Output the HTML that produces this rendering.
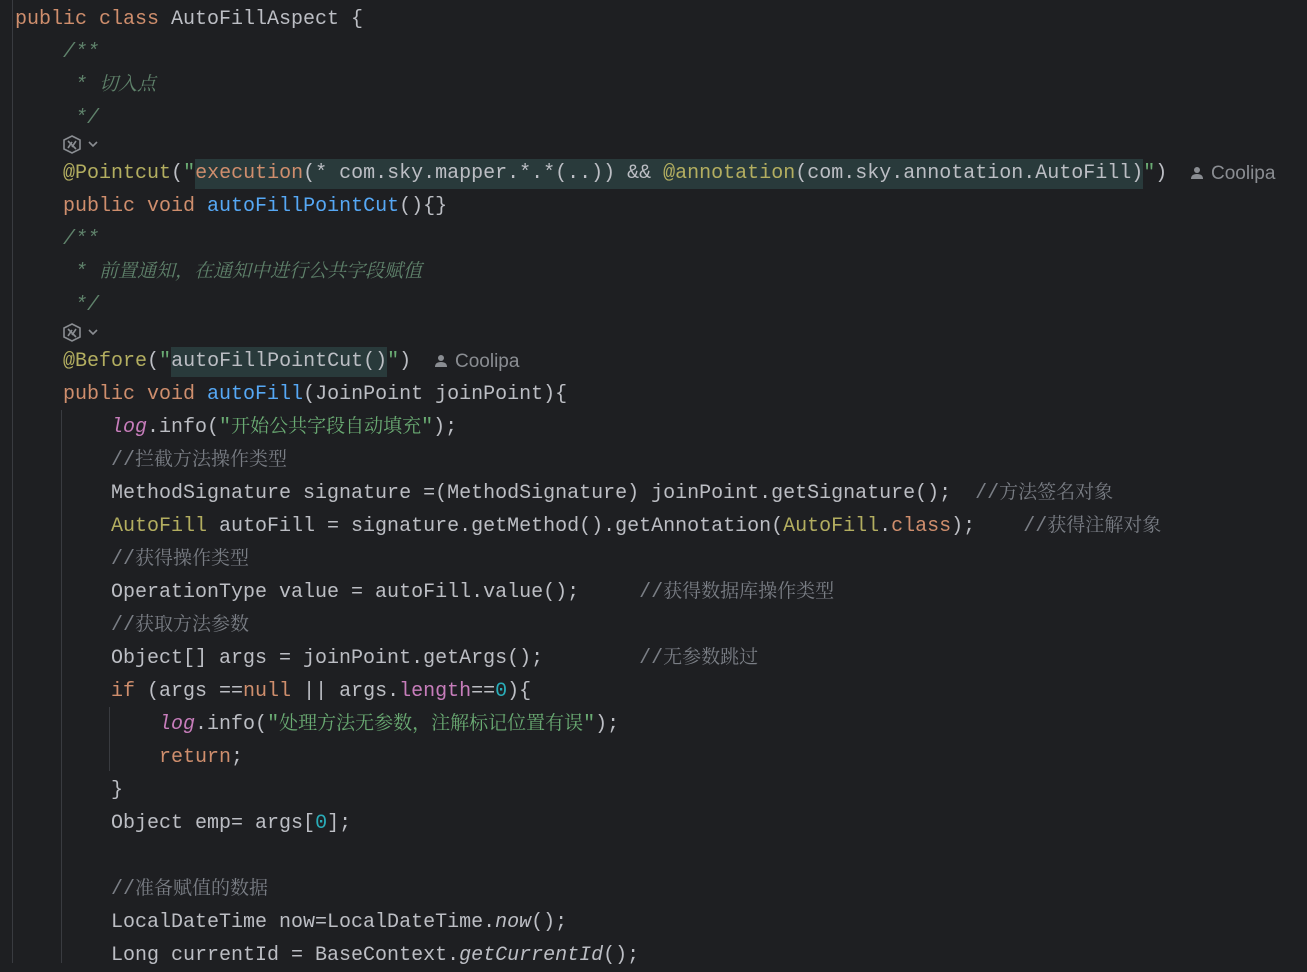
<!DOCTYPE html>
<html><head><meta charset="utf-8"><style>
body{margin:0;width:1307px;height:963px;background:#1e1f22;overflow:hidden;position:relative;font-family:"Liberation Mono","Noto Sans CJK SC",monospace;font-size:20px;color:#bcbec4}
.l{position:absolute;left:15px;white-space:pre;height:33px;line-height:33px}
.l *{line-height:1px}
.k{color:#cf8e6d}.f{color:#56a8f5}.a{color:#b3ae60}.s{color:#6aab73}.c{color:#7a7e85;font-family:"Liberation Mono","Noto Serif CJK SC",monospace}.d{color:#5f826b;font-style:italic}.lg{color:#c77dbb;font-style:italic}.n{color:#2aacb8}.i{font-style:italic}
.cj{font-family:"Noto Serif CJK SC",serif;font-size:19px}
.c .cj,.c{}
.hl{background:#293a3b;line-height:30px!important;display:inline-block}
.hint{position:absolute;font-family:"Liberation Sans",sans-serif;font-size:19px;color:#8a8d92;line-height:33px}
.ic{position:absolute;left:63px}
</style></head><body>
<div style="position:absolute;left:12px;top:0;width:1px;height:963px;background:#393b40"></div>
<div style="position:absolute;left:61px;top:410px;width:1px;height:553px;background:#393b40"></div>
<div style="position:absolute;left:109px;top:707px;width:1px;height:64px;background:#393b40"></div>
<div class="l" style="top:3px"><span class="k">public class </span>AutoFillAspect {</div>
<div class="l d" style="top:36px">    /**</div>
<div class="l d" style="top:69px">     * <span class="cj">切入点</span></div>
<div class="l d" style="top:102px">     */</div>
<svg class="ic" style="top:135px" width="40" height="20" viewBox="0 0 40 20"><g fill="none" stroke="#8a8d92" stroke-width="1.6"><polygon points="9,1 17,5 17,14 9,18 1,14 1,5"/><path d="M5 6 L13 14 M13 6 L9 12 M5 13 L9 7"/><path d="M26 7 L30 11 L34 7"/></g></svg>
<div class="l" style="top:157px">    <span class="a">@Pointcut</span>(<span class="s">"</span><span class="hl"><span class="k">execution</span>(* com.sky.mapper.*.*(..)) &amp;&amp; <span class="a">@annotation</span>(com.sky.annotation.AutoFill)</span><span class="s">"</span>)</div>
<svg style="position:absolute;left:1190px;top:166px" width="14" height="14" viewBox="0 0 14 14"><circle cx="7" cy="4" r="3" fill="#8a8d92"/><path d="M1 13 Q1 8 7 8 Q13 8 13 13 Z" fill="#8a8d92"/></svg>
<div class="hint" style="left:1211px;top:157px">Coolipa</div>
<div class="l" style="top:190px">    <span class="k">public void </span><span class="f">autoFillPointCut</span>(){}</div>
<div class="l d" style="top:223px">    /**</div>
<div class="l d" style="top:256px">     * <span class="cj">前置通知，在通知中进行公共字段赋值</span></div>
<div class="l d" style="top:289px">     */</div>
<svg class="ic" style="top:323px" width="40" height="20" viewBox="0 0 40 20"><g fill="none" stroke="#8a8d92" stroke-width="1.6"><polygon points="9,1 17,5 17,14 9,18 1,14 1,5"/><path d="M5 6 L13 14 M13 6 L9 12 M5 13 L9 7"/><path d="M26 7 L30 11 L34 7"/></g></svg>
<div class="l" style="top:345px">    <span class="a">@Before</span>(<span class="s">"</span><span class="hl">autoFillPointCut()</span><span class="s">"</span>)</div>
<svg style="position:absolute;left:434px;top:354px" width="14" height="14" viewBox="0 0 14 14"><circle cx="7" cy="4" r="3" fill="#8a8d92"/><path d="M1 13 Q1 8 7 8 Q13 8 13 13 Z" fill="#8a8d92"/></svg>
<div class="hint" style="left:455px;top:345px">Coolipa</div>
<div class="l" style="top:378px">    <span class="k">public void </span><span class="f">autoFill</span>(JoinPoint joinPoint){</div>
<div class="l" style="top:411px">        <span class="lg">log</span>.info(<span class="s">"<span class="cj">开始公共字段自动填充</span>"</span>);</div>
<div class="l c" style="top:444px">        //<span class="cj">拦截方法操作类型</span></div>
<div class="l" style="top:477px">        MethodSignature signature =(MethodSignature) joinPoint.getSignature();  <span class="c">//<span class="cj">方法签名对象</span></span></div>
<div class="l" style="top:510px">        <span class="a">AutoFill</span> autoFill = signature.getMethod().getAnnotation(<span class="a">AutoFill</span>.<span class="k">class</span>);    <span class="c">//<span class="cj">获得注解对象</span></span></div>
<div class="l c" style="top:543px">        //<span class="cj">获得操作类型</span></div>
<div class="l" style="top:576px">        OperationType value = autoFill.value();     <span class="c">//<span class="cj">获得数据库操作类型</span></span></div>
<div class="l c" style="top:609px">        //<span class="cj">获取方法参数</span></div>
<div class="l" style="top:642px">        Object[] args = joinPoint.getArgs();        <span class="c">//<span class="cj">无参数跳过</span></span></div>
<div class="l" style="top:675px">        <span class="k">if </span>(args ==<span class="k">null</span> || args.<span style="color:#c77dbb">length</span>==<span class="n">0</span>){</div>
<div class="l" style="top:708px">            <span class="lg">log</span>.info(<span class="s">"<span class="cj">处理方法无参数，注解标记位置有误</span>"</span>);</div>
<div class="l" style="top:741px">            <span class="k">return</span>;</div>
<div class="l" style="top:774px">        }</div>
<div class="l" style="top:807px">        Object emp= args[<span class="n">0</span>];</div>
<div class="l c" style="top:873px">        //<span class="cj">准备赋值的数据</span></div>
<div class="l" style="top:906px">        LocalDateTime now=LocalDateTime.<span class="i">now</span>();</div>
<div class="l" style="top:939px">        Long currentId = BaseContext.<span class="i">getCurrentId</span>();</div>
</body></html>
